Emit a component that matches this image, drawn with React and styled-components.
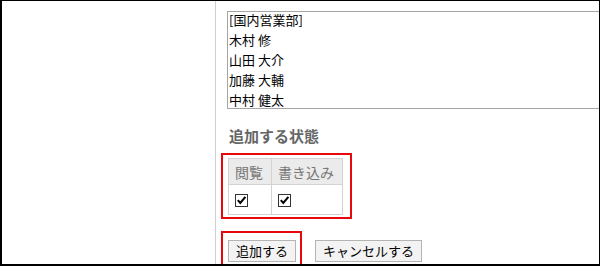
import React from "react";
import styled, {createGlobalStyle} from "styled-components";

const GlobalStyle = createGlobalStyle`
    html, body {
        margin: 0;
        padding: 0;
        background: #fff;
    }
    body {
        font-family: "Noto Sans CJK JP", "Liberation Sans", sans-serif;
        color: #000;
    }
`;

const Frame = styled.div`
    box-sizing: border-box;
    width: 600px;
    height: 266px;
    border: 1px solid #000;
    border-left-width: 2px;
    border-bottom-width: 2px;
    display: flex;
    overflow: hidden;
    background: #fff;
`;

const LeftColumn = styled.div`
    width: 213px;
    flex-shrink: 0;
`;

const Panel = styled.div`
    flex: 1;
    border-left: 1px solid #cfcfcf;
    padding: 10px 0 0 5px;
    display: flex;
    flex-direction: column;
    align-items: flex-start;
    min-width: 0;

    & > * {
        flex-shrink: 0;
    }
`;

const ListBox = styled.div`
    margin-left: 6px;
    width: 420px;
    height: 96px;
    border: 1px solid #a5a5a5;
    overflow: hidden;
`;

const ListInner = styled.ul`
    list-style: none;
    margin: -2px 0 0 0;
    padding: 0;
`;

const ListItem = styled.li`
    height: 20px;
    line-height: 20px;
    font-size: 13px;
    padding-left: 1px;
    white-space: nowrap;
`;

const Heading = styled.div`
    margin: 17px 0 0 8px;
    font-size: 15px;
    line-height: 20px;
    font-weight: bold;
    color: #666;
`;

const Highlight = styled.div`
    border: 2px solid #e8070d;
    padding: ${p => p.$pad};
    margin-top: ${p => p.$top}px;
`;

const Table = styled.table`
    border-collapse: collapse;
    font-size: 14px;
`;

const HeadCell = styled.th`
    background: #ebebeb;
    color: #777;
    font-weight: normal;
    text-align: left;
    height: 26px;
    padding: 0 6px;
    border: 1px solid #d3d3d3;
    white-space: nowrap;
    width: ${p => p.$w}px;
    box-sizing: border-box;
`;

const BodyCell = styled.td`
    height: 29px;
    padding: 0 6px;
    border: 1px solid #d3d3d3;
    vertical-align: middle;
`;

const CheckBox = styled.span`
    display: block;
    width: 11px;
    height: 11px;
    border: 1px solid #333;
    background: #fff;
    position: relative;
    margin-top: 1px;

    svg {
        position: absolute;
        left: 0;
        top: 0;
    }
`;

const ButtonRow = styled.div`
    display: flex;
    align-items: flex-start;
    gap: 13px;
    margin-top: 12px;
`;

const Button = styled.button`
    box-sizing: border-box;
    height: 22px;
    padding: 0 7px;
    font-family: "Noto Sans CJK JP", "Liberation Sans", sans-serif;
    font-size: 13px;
    line-height: 20px;
    color: #000;
    background: #f3f3f3;
    border: 1px solid #b4b4b4;
    border-radius: 0;
    white-space: nowrap;
`;

const CancelWrap = styled.div`
    padding-top: 6px;
`;

const Check = () => (
    <CheckBox>
        <svg width="11" height="11" viewBox="0 0 11 11">
            <path d="M1.8 5.2 L4.3 8 L9.4 1.8" fill="none" stroke="#000" strokeWidth="2" />
        </svg>
    </CheckBox>
);

const members = ["[国内営業部]", "木村 修", "山田 大介", "加藤 大輔", "中村 健太"];

export default () => {
    return (
        <>
            <GlobalStyle />
            <Frame>
                <LeftColumn />
                <Panel>
                    <ListBox>
                        <ListInner>
                            {members.map(name => (
                                <ListItem key={name}>{name}</ListItem>
                            ))}
                        </ListInner>
                    </ListBox>
                    <Heading>追加する状態</Heading>
                    <Highlight $pad="3px 7px 2px 5px" $top={7}>
                        <Table>
                            <thead>
                                <tr>
                                    <HeadCell $w={43}>閲覧</HeadCell>
                                    <HeadCell $w={71}>書き込み</HeadCell>
                                </tr>
                            </thead>
                            <tbody>
                                <tr>
                                    <BodyCell><Check /></BodyCell>
                                    <BodyCell><Check /></BodyCell>
                                </tr>
                            </tbody>
                        </Table>
                    </Highlight>
                    <ButtonRow>
                        <Highlight $pad="4px 4px 10px 5px" $top={0}>
                            <Button>追加する</Button>
                        </Highlight>
                        <CancelWrap>
                            <Button>キャンセルする</Button>
                        </CancelWrap>
                    </ButtonRow>
                </Panel>
            </Frame>
        </>
    )
}
